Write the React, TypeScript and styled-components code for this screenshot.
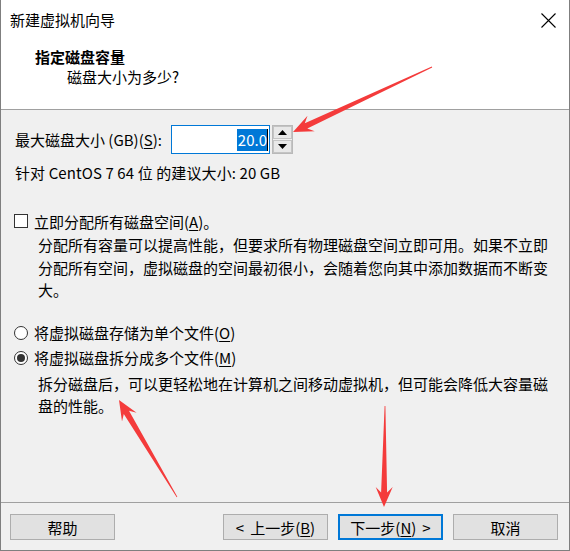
import React from "react";
import styled, { createGlobalStyle } from "styled-components";

const GlobalStyle = createGlobalStyle`
  html, body { margin: 0; padding: 0; background: #ffffff; }
  * { box-sizing: border-box; }
`;

const FONT = `"Microsoft YaHei UI", "Noto Sans CJK SC", "Noto Sans", sans-serif`;

const Window = styled.div`
  position: relative;
  width: 570px;
  height: 551px;
  display: flex;
  flex-direction: column;
  background: #f0f0f0;
  border: 1px solid #7f7f7f;
  border-top: 0;
  font-family: ${FONT};
  font-size: 15px;
  color: #000;
  overflow: hidden;
`;

const TitleBar = styled.div`
  height: 40px;
  flex: none;
  background: #fff;
  display: flex;
  align-items: center;
  justify-content: space-between;
  padding: 0 13px 0 9px;
`;

const TitleText = styled.div`
  font-size: 15px;
  line-height: 20px;
`;

const Header = styled.div`
  flex: none;
  height: 70px;
  background: #fff;
  border-bottom: 1px solid #a0a0a0;
  padding: 7px 0 0 34px;
`;

const HeaderTitle = styled.div`
  font-weight: bold;
  line-height: 20px;
`;

const HeaderSub = styled.div`
  line-height: 20px;
  padding-left: 32px;
`;

const Body = styled.div`
  flex: 1;
  padding: 15px 0 0 13px;
  display: flex;
  flex-direction: column;
`;

const SizeRow = styled.div`
  display: flex;
  align-items: center;
  height: 29px;
`;

const FieldLabel = styled.div`
  width: 157px;
  padding-left: 1px;
  line-height: 20px;
  white-space: nowrap;
`;

const SpinInput = styled.div`
  width: 99px;
  height: 29px;
  background: #fff;
  border: 1px solid #0078d7;
  display: flex;
  align-items: center;
  justify-content: flex-end;
  padding-right: 1px;
`;

const Selected = styled.span`
  background: #0078d7;
  color: #fff;
  line-height: 22px;
  padding: 0 0 0 1px;
`;

const Caret = styled.span`
  width: 1px;
  height: 22px;
  background: #000;
`;

const Spinner = styled.div`
  margin-left: 2px;
  width: 21px;
  height: 29px;
  border: 1px solid #b9b9b9;
  display: flex;
  flex-direction: column;
  gap: 1px;
  background: #f0f0f0;
`;

const SpinButton = styled.div`
  flex: 1;
  background: #e8e8e8;
  border: 1px solid #c4c4c4;
  display: flex;
  align-items: center;
  justify-content: center;
`;

const Note = styled.div`
  margin-top: 9px;
  padding-left: 1px;
  line-height: 20px;
  white-space: nowrap;
  letter-spacing: 0.1px;
`;

const OptionRow = styled.div<{ $gap: number }>`
  margin-top: ${(p) => p.$gap}px;
  display: flex;
  align-items: center;
  height: 20px;
  gap: 6px;
  white-space: nowrap;
`;

const CheckBox = styled.div`
  width: 14px;
  height: 14px;
  border: 1px solid #333;
  background: #fff;
`;

const Radio = styled.div<{ $checked?: boolean }>`
  width: 14px;
  height: 14px;
  border-radius: 50%;
  border: 1px solid #333;
  background: #fff;
  display: flex;
  align-items: center;
  justify-content: center;
  &::after {
    content: "";
    display: ${(p) => (p.$checked ? "block" : "none")};
    width: 8px;
    height: 8px;
    border-radius: 50%;
    background: #333;
  }
`;

const Desc = styled.div<{ $gap: number }>`
  margin-top: ${(p) => p.$gap}px;
  padding-left: 24px;
  line-height: 22.5px;
  white-space: nowrap;
`;

const U = styled.span`
  text-decoration: underline;
  text-underline-offset: 2px;
`;

const Footer = styled.div`
  flex: none;
  height: 48px;
  border-top: 1px solid #a0a0a0;
  display: flex;
  align-items: flex-start;
  padding: 11px 11px 0 9px;
`;

const Spacer = styled.div`
  flex: 1;
`;

const ButtonGroup = styled.div`
  display: flex;
  gap: 10px;
`;

const Button = styled.button<{ $primary?: boolean }>`
  width: 105px;
  height: 26px;
  margin: 0;
  padding: 0;
  font-family: ${FONT};
  font-size: 15px;
  color: #000;
  background: #e1e1e1;
  border: ${(p) => (p.$primary ? "2px solid #0078d7" : "1px solid #adadad")};
  display: flex;
  align-items: center;
  justify-content: center;
  gap: 6px;
  white-space: nowrap;
`;

const Overlay = styled.svg`
  position: absolute;
  left: 0;
  top: 0;
  pointer-events: none;
`;

type Arrow = { tx: number; ty: number; px: number; py: number };

const arrows: Arrow[] = [
  { tx: 431, ty: 67, px: 292, py: 132 },
  { tx: 176, ty: 497, px: 118, py: 400 },
  { tx: 384, ty: 406, px: 383, py: 507 },
];

function arrowPoints({ tx, ty, px, py }: Arrow): string {
  const dx = px - tx;
  const dy = py - ty;
  const L = Math.hypot(dx, dy);
  const ux = dx / L;
  const uy = dy / L;
  const nx = -uy;
  const ny = ux;
  const headLen = 20;
  const headW = 17;
  const neckW = 6;
  const tailW = 0.8;
  const nk = { x: px - ux * headLen * 0.72, y: py - uy * headLen * 0.72 };
  const bs = { x: px - ux * headLen, y: py - uy * headLen };
  const pts = [
    [tx + (nx * tailW) / 2, ty + (ny * tailW) / 2],
    [nk.x + (nx * neckW) / 2, nk.y + (ny * neckW) / 2],
    [bs.x + (nx * headW) / 2, bs.y + (ny * headW) / 2],
    [px, py],
    [bs.x - (nx * headW) / 2, bs.y - (ny * headW) / 2],
    [nk.x - (nx * neckW) / 2, nk.y - (ny * neckW) / 2],
    [tx - (nx * tailW) / 2, ty - (ny * tailW) / 2],
  ];
  return pts.map(([x, y]) => `${x.toFixed(1)},${y.toFixed(1)}`).join(" ");
}

const CloseIcon = () => (
  <svg width="15" height="15" viewBox="0 0 15 15">
    <path d="M0.5 0.5 L14.5 14.5 M14.5 0.5 L0.5 14.5" stroke="#000" strokeWidth="1.1" fill="none" />
  </svg>
);

const UpTri = () => (
  <svg width="9" height="5" viewBox="0 0 9 5">
    <path d="M0 5 L4.5 0 L9 5 Z" fill="#000" />
  </svg>
);
const DownTri = () => (
  <svg width="9" height="5" viewBox="0 0 9 5">
    <path d="M0 0 L9 0 L4.5 5 Z" fill="#000" />
  </svg>
);

export default function App() {
  return (
    <>
      <GlobalStyle />
      <Window>
        <TitleBar>
          <TitleText>新建虚拟机向导</TitleText>
          <CloseIcon />
        </TitleBar>
        <Header>
          <HeaderTitle>指定磁盘容量</HeaderTitle>
          <HeaderSub>磁盘大小为多少?</HeaderSub>
        </Header>
        <Body>
          <SizeRow>
            <FieldLabel>
              最大磁盘大小 (GB)(<U>S</U>):
            </FieldLabel>
            <SpinInput>
              <Selected>20.0</Selected>
              <Caret />
            </SpinInput>
            <Spinner>
              <SpinButton>
                <UpTri />
              </SpinButton>
              <SpinButton>
                <DownTri />
              </SpinButton>
            </Spinner>
          </SizeRow>
          <Note>针对 CentOS 7 64 位 的建议大小: 20 GB</Note>
          <OptionRow $gap={28}>
            <CheckBox />
            <span>
              立即分配所有磁盘空间(<U>A</U>)。
            </span>
          </OptionRow>
          <Desc $gap={3}>
            分配所有容量可以提高性能，但要求所有物理磁盘空间立即可用。如果不立即
            <br />
            分配所有空间，虚拟磁盘的空间最初很小，会随着您向其中添加数据而不断变
            <br />
            大。
          </Desc>
          <OptionRow $gap={21}>
            <Radio />
            <span>
              将虚拟磁盘存储为单个文件(<U>O</U>)
            </span>
          </OptionRow>
          <OptionRow $gap={5}>
            <Radio $checked />
            <span>
              将虚拟磁盘拆分成多个文件(<U>M</U>)
            </span>
          </OptionRow>
          <Desc $gap={5}>
            拆分磁盘后，可以更轻松地在计算机之间移动虚拟机，但可能会降低大容量磁
            <br />
            盘的性能。
          </Desc>
        </Body>
        <Footer>
          <Button>帮助</Button>
          <Spacer />
          <ButtonGroup>
            <Button>
              <span>&lt;</span>
              <span>
                上一步(<U>B</U>)
              </span>
            </Button>
            <Button $primary>
              <span>
                下一步(<U>N</U>)
              </span>
              <span>&gt;</span>
            </Button>
            <Button>取消</Button>
          </ButtonGroup>
        </Footer>
        <Overlay width="570" height="551" viewBox="0 0 570 551">
          {arrows.map((a, i) => (
            <polygon key={i} points={arrowPoints(a)} fill="#f43b3b" />
          ))}
        </Overlay>
      </Window>
    </>
  );
}
